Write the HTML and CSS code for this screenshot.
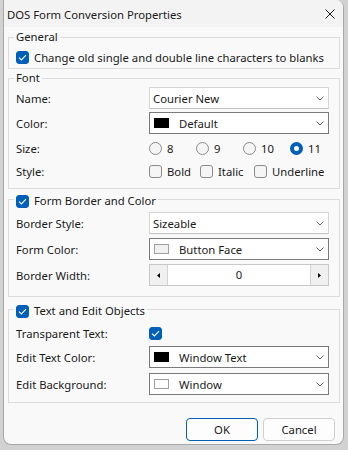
FILE: index.html
```html
<!DOCTYPE html>
<html lang="en">
<head>
<meta charset="UTF-8">
<title>DOS Form Conversion Properties</title>
<link rel="stylesheet" href="styles.css">
</head>
<body>

<div class="window">
    <!-- Title bar -->
    <div class="titlebar">
        <span class="title">DOS Form Conversion Properties</span>
        <svg class="close" width="10" height="10" viewBox="0 0 10 10"><path d="M0.5 0.5L9.5 9.5M9.5 0.5L0.5 9.5" stroke="#1b1b1b" stroke-width="1" fill="none"/></svg>
    </div>

    <div class="content">
        <!-- General -->
        <fieldset class="group group-general">
            <legend>General</legend>
            <div class="row row-check">
                <span class="check on"><svg width="9" height="7" viewBox="0 0 9 7"><path d="M1 3.6L3.4 6L8 1.2" fill="none" stroke="#fff" stroke-width="1.1"/></svg></span>
                <span>Change old single and double line characters to blanks</span>
            </div>
        </fieldset>

        <!-- Font -->
        <fieldset class="group group-font">
            <legend>Font</legend>
            <div class="row">
                <span class="label">Name:</span>
                <div class="combo">
                    <span class="combo-text">Courier New</span>
                    <svg class="chevron" width="8" height="5" viewBox="0 0 8 5"><path d="M0.5 0.5L4 4L7.5 0.5" fill="none" stroke="#606060" stroke-width="1"/></svg>
                </div>
            </div>
            <div class="row">
                <span class="label">Color:</span>
                <div class="combo combo-dark">
                    <span class="swatch swatch-black"></span>
                    <span class="combo-text">Default</span>
                    <svg class="chevron" width="8" height="5" viewBox="0 0 8 5"><path d="M0.5 0.5L4 4L7.5 0.5" fill="none" stroke="#606060" stroke-width="1"/></svg>
                </div>
            </div>
            <div class="row row-option row-sep">
                <span class="label">Size:</span>
                <div class="options">
                    <span class="option opt-radio"><span class="radio"></span>8</span>
                    <span class="option opt-radio"><span class="radio"></span>9</span>
                    <span class="option opt-radio"><span class="radio"></span>10</span>
                    <span class="option opt-radio"><span class="radio on"></span>11</span>
                </div>
            </div>
            <div class="row row-option">
                <span class="label">Style:</span>
                <div class="options">
                    <span class="option opt-bold"><span class="check"></span>Bold</span>
                    <span class="option opt-italic"><span class="check"></span>Italic</span>
                    <span class="option"><span class="check"></span>Underline</span>
                </div>
            </div>
        </fieldset>

        <!-- Form Border and Color -->
        <fieldset class="group group-border">
            <legend class="legend-check">
                <span class="check on"><svg width="9" height="7" viewBox="0 0 9 7"><path d="M1 3.6L3.4 6L8 1.2" fill="none" stroke="#fff" stroke-width="1.1"/></svg></span>
                <span>Form Border and Color</span>
            </legend>
            <div class="row">
                <span class="label">Border Style:</span>
                <div class="combo">
                    <span class="combo-text">Sizeable</span>
                    <svg class="chevron" width="8" height="5" viewBox="0 0 8 5"><path d="M0.5 0.5L4 4L7.5 0.5" fill="none" stroke="#606060" stroke-width="1"/></svg>
                </div>
            </div>
            <div class="row">
                <span class="label">Form Color:</span>
                <div class="combo combo-dark">
                    <span class="swatch swatch-face"></span>
                    <span class="combo-text">Button Face</span>
                    <svg class="chevron" width="8" height="5" viewBox="0 0 8 5"><path d="M0.5 0.5L4 4L7.5 0.5" fill="none" stroke="#606060" stroke-width="1"/></svg>
                </div>
            </div>
            <div class="row">
                <span class="label">Border Width:</span>
                <div class="spin">
                    <span class="spin-btn spin-left"><svg width="3" height="5" viewBox="0 0 3 5"><path d="M3 0L0 2.5L3 5Z" fill="#000"/></svg></span>
                    <span class="spin-value">0</span>
                    <span class="spin-btn spin-right"><svg width="3" height="5" viewBox="0 0 3 5"><path d="M0 0L3 2.5L0 5Z" fill="#000"/></svg></span>
                </div>
            </div>
        </fieldset>

        <!-- Text and Edit Objects -->
        <fieldset class="group group-text">
            <legend class="legend-check">
                <span class="check on"><svg width="9" height="7" viewBox="0 0 9 7"><path d="M1 3.6L3.4 6L8 1.2" fill="none" stroke="#fff" stroke-width="1.1"/></svg></span>
                <span>Text and Edit Objects</span>
            </legend>
            <div class="row">
                <span class="label">Transparent Text:</span>
                <span class="check on"><svg width="9" height="7" viewBox="0 0 9 7"><path d="M1 3.6L3.4 6L8 1.2" fill="none" stroke="#fff" stroke-width="1.1"/></svg></span>
            </div>
            <div class="row">
                <span class="label">Edit Text Color:</span>
                <div class="combo combo-dark">
                    <span class="swatch swatch-black"></span>
                    <span class="combo-text">Window Text</span>
                    <svg class="chevron" width="8" height="5" viewBox="0 0 8 5"><path d="M0.5 0.5L4 4L7.5 0.5" fill="none" stroke="#606060" stroke-width="1"/></svg>
                </div>
            </div>
            <div class="row row-last">
                <span class="label">Edit Background:</span>
                <div class="combo combo-dark">
                    <span class="swatch swatch-white"></span>
                    <span class="combo-text">Window</span>
                    <svg class="chevron" width="8" height="5" viewBox="0 0 8 5"><path d="M0.5 0.5L4 4L7.5 0.5" fill="none" stroke="#606060" stroke-width="1"/></svg>
                </div>
            </div>
        </fieldset>

        <!-- Buttons -->
        <div class="footer">
            <button class="btn btn-default">OK</button>
            <button class="btn">Cancel</button>
        </div>
    </div>
</div>

</body>
</html>
```

FILE: styles.css
```css
/* Dialog */
body {
    margin: 0;
    background: #d2d2d2;
    font-family: "Noto Sans", "Liberation Sans", sans-serif;
    font-size: 11.3px;
    color: #1a1a1a;
}
.window {
    margin-left: 3px;
    width: 341px;
    height: 445px;
    box-sizing: border-box;
    border: 1px solid #a8a8a8;
    border-top: none;
    border-radius: 0 8px 8px 8px;
    background: #f9f9f9;
    overflow: hidden;
    white-space: nowrap;
}

/* TITLE BAR */
.titlebar {
    height: 27px;
    display: flex;
    align-items: center;
    justify-content: space-between;
    padding: 1px 8px 0 3px;
    box-sizing: border-box;
    background: #f3f3f3;
}

/* GROUP BOXES */
.content {
    padding: 0 3px 0 4px;
    display: flex;
    flex-direction: column;
}
.group {
    display: flex;
    flex-direction: column;
    margin: 0;
    border: 1px solid #dcdcdc;
    min-width: 0;
}
.group legend {
    padding: 0 2px;
    margin-left: -2px;
    line-height: 14px;
}
.group .legend-check {
    display: flex;
    align-items: center;
    gap: 5px;
    height: 14px;
    padding-top: 4px;
}
.group-general {
    margin-top: 3px;
    padding: 3px 10px 1px 7px;
}
.group-font {
    margin-top: 2px;
    padding: 2px 10px 7px 7px;
    gap: 3px;
}
.group-border {
    margin-top: 1px;
    padding: 4px 10px 10px 7px;
    gap: 4px;
}
.group-text {
    margin-top: 3px;
    padding: 4px 10px 7px 7px;
    gap: 2px;
}

/* ROWS */
.row {
    display: flex;
    align-items: center;
    height: 22px;
}
.row-check {
    height: 20px;
    gap: 5px;
}
.row-option {
    height: 20px;
}
.row-sep {
    margin-top: 1px;
}
.row-last {
    margin-top: 3px;
}
.label {
    width: 133px;
    flex-shrink: 0;
}

/* CHECKBOXES AND RADIOS */
.check {
    width: 13px;
    height: 13px;
    box-sizing: border-box;
    border: 1px solid #8b8b8b;
    border-radius: 3px;
    background: #f5f5f5;
    display: inline-flex;
    align-items: center;
    justify-content: center;
    flex-shrink: 0;
}
.check.on {
    border-color: #005fb8;
    background: #005fb8;
}
.radio {
    width: 13px;
    height: 13px;
    box-sizing: border-box;
    border: 1px solid #8b8b8b;
    border-radius: 50%;
    background: #f5f5f5;
    flex-shrink: 0;
}
.radio.on {
    border: 4px solid #005fb8;
    background: #fff;
}
.options {
    display: flex;
    align-items: center;
}
.option {
    display: flex;
    align-items: center;
    gap: 5px;
}
.opt-radio {
    width: 47px;
}
.opt-bold {
    width: 51px;
}
.opt-italic {
    width: 54px;
}

/* COMBO BOXES */
.combo {
    width: 180px;
    height: 22px;
    box-sizing: border-box;
    border: 1px solid #d6d6d6;
    border-bottom-color: #c4c4c4;
    background: #fff;
    display: flex;
    align-items: center;
    padding: 0 4px 0 3px;
}
.combo-dark {
    border-color: #7a7a7a;
    padding-left: 4px;
}
.chevron {
    margin-left: auto;
}
.swatch {
    width: 15px;
    height: 10px;
    box-sizing: border-box;
    margin-right: 10px;
    border: 1px solid #a0a0a0;
}
.swatch-black {
    background: #000;
    border-color: #000;
}
.swatch-face {
    background: #f0f0f0;
}
.swatch-white {
    background: #fff;
}

/* SPIN BOX */
.spin {
    width: 180px;
    height: 22px;
    box-sizing: border-box;
    border: 1px solid #c8c8c8;
    background: #fff;
    display: flex;
}
.spin-btn {
    width: 17px;
    background: #f0f0f0;
    display: flex;
    align-items: center;
    justify-content: center;
}
.spin-left {
    border-right: 1px solid #d4d4d4;
}
.spin-right {
    border-left: 1px solid #d4d4d4;
}
.spin-value {
    flex: 1;
    text-align: center;
    line-height: 20px;
}

/* BUTTONS */
.footer {
    display: flex;
    justify-content: flex-end;
    gap: 5px;
    padding: 15px 5px 0 0;
}
.btn {
    width: 72px;
    height: 23px;
    box-sizing: border-box;
    border: 1px solid #d0d0d0;
    border-radius: 4px;
    background: #fdfdfd;
    font-family: inherit;
    font-size: 11.3px;
    color: #1a1a1a;
    padding: 0;
}
.btn-default {
    border-color: #005fb8;
}
```
